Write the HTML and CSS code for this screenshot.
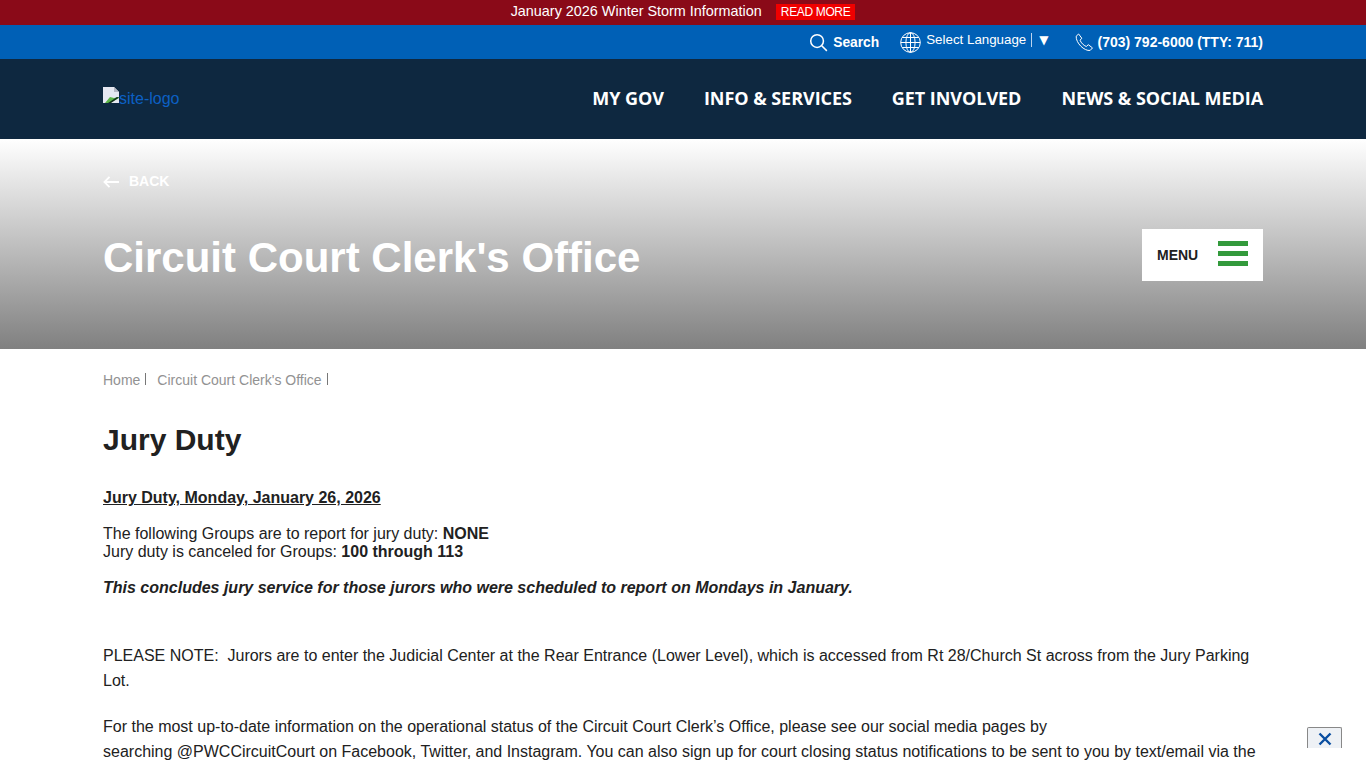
FILE: index.html
```html
<!DOCTYPE html>
<html lang="en">
<head>
  <meta charset="UTF-8" />
  <meta name="viewport" content="width=device-width, initial-scale=1.0"/>
  <title>Jury Duty</title>
  <link rel="stylesheet" href="styles.css">
</head>
<body>

  <!-- Alert bar -->
  <div class="alert-bar">
    <span class="alert-text">January 2026 Winter Storm Information</span>
    <a href="#" class="alert-btn">READ MORE</a>
  </div>

  <!-- Utility bar -->
  <div class="util-bar">
    <div class="wrap util-row">
      <a href="#" class="util-link util-search">
        <svg class="util-icon" width="19" height="19" viewBox="0 0 20 20" fill="none" stroke="#fff" stroke-width="1.6"><circle cx="8.5" cy="8.5" r="6.7"/><path d="M13.4 13.4l5.400 5.400"/></svg>
        Search
      </a>
      <div class="util-lang">
        <svg class="util-icon" width="21" height="21" viewBox="0 0 21 21" fill="none" stroke="#fff" stroke-width="1"><circle cx="10.5" cy="10.5" r="9.8"/><ellipse cx="10.5" cy="10.5" rx="4.6" ry="9.8"/><path d="M10.5.7v19.6M.7 10.5h19.6M2.2 5.500h16.600M2.200 15.500h16.600"/></svg>
        <span class="lang-text">Select Language</span>
        <span class="lang-arrow">▼</span>
      </div>
      <a href="#" class="util-link util-phone">
        <svg class="util-icon" width="19" height="19" viewBox="0 0 19 19" fill="none" stroke="#fff" stroke-width="1"><path d="M1.200 3.200L3.600 1l3.200 4.200-1.700 2c.9 2.600 3.400 5.200 6.200 6.300l2-1.800 4.200 3.200-2.300 2.500C9.500 18.500.6 9.800 1.200 3.200z"/></svg>
        (703) 792-6000 (TTY: 711)
      </a>
    </div>
  </div>

  <!-- Main header -->
  <header class="main-header">
    <div class="wrap header-row">
      <a href="#" class="logo">
        <svg class="broken-img" width="16" height="16" viewBox="0 0 16 16"><path d="M0 0h11l5 5v11H0z" fill="#e6e8f2"/><path d="M11 0l5 5h-5z" fill="#b5b8c4"/><path d="M2 16l5-6 4 1 5-1v1l-9 5z" fill="#5cb548"/><path d="M5 16l9-6 2 .500-8 5.500z" fill="#12301c"/></svg><span>site-logo</span>
      </a>
      <nav class="main-nav">
        <a href="#">MY GOV</a>
        <a href="#">INFO &amp; SERVICES</a>
        <a href="#">GET INVOLVED</a>
        <a href="#">NEWS &amp; SOCIAL MEDIA</a>
      </nav>
    </div>
  </header>

  <!-- Hero -->
  <section class="hero">
    <div class="wrap">
      <a href="#" class="back-link">
        <svg width="16" height="12" viewBox="0 0 16 12" fill="none" stroke="#fff" stroke-width="1.8"><path d="M16 6H1.500M6.500.8L1.400 6l5.100 5.200"/></svg>
        BACK
      </a>
      <div class="hero-row">
        <h1>Circuit Court Clerk's Office</h1>
        <button class="menu-btn">
          MENU
          <span class="menu-bars"><i></i><i></i><i></i></span>
        </button>
      </div>
    </div>
  </section>

  <!-- Content -->
  <main class="wrap content">
    <div class="crumbs">
      <a href="#">Home</a>
      <a href="#">Circuit Court Clerk's Office</a>
    </div>

    <h2>Jury Duty</h2>

    <p class="date-line"><strong><u>Jury Duty, Monday, January 26, 2026</u></strong></p>

    <p class="tight">The following Groups are to report for jury duty: <strong>NONE</strong><br>
    Jury duty is canceled for Groups: <strong>100 through 113</strong></p>

    <p class="tight"><strong><em>This concludes jury service for those jurors who were scheduled to report on Mondays in January.</em></strong></p>

    <p class="note">PLEASE NOTE:&nbsp; Jurors are to enter the Judicial Center at the Rear Entrance (Lower Level), which is accessed from Rt 28/Church St across from the Jury Parking Lot.</p>

    <p class="status">For the most up-to-date information on the operational status of the Circuit Court Clerk’s Office, please see our social media pages by<br>
    searching @PWCCircuitCourt on Facebook, Twitter, and Instagram. You can also sign up for court closing status notifications to be sent to you by text/email via the</p>
  </main>

  <button class="close-btn" aria-label="Close">
    <svg width="14" height="14" viewBox="0 0 14 14" fill="none" stroke="#0a4ea0" stroke-width="2.4"><path d="M1.500 1.500l11 11M12.500 1.500l-11 11"/></svg>
  </button>

</body>
</html>
```

FILE: styles.css
```css
html, body {
  height: 100%;
  overflow: hidden;
}

body {
  font-family: "Liberation Sans", Arial, sans-serif;
  font-size: 16px;
  color: #212121;
  background: #fff;
  margin: 0;
  padding: 0;
}

a {
  text-decoration: none;
}

.wrap {
  width: 1160px;
  margin: 0 auto;
}

.alert-bar {
  height: 25px;
  background: #8a0a18;
  color: #fff;
  display: flex;
  justify-content: center;
  align-items: flex-start;
  gap: 14px;
  font-size: 14.4px;
  line-height: 22px;
}

.alert-btn {
  margin-top: 4px;
  background: #f00000;
  color: #fff;
  font-size: 12px;
  letter-spacing: -0.35px;
  line-height: 16px;
  padding: 0 5px;
}

.util-bar {
  height: 34px;
  background: #0060b6;
}

.util-row {
  height: 34px;
  display: flex;
  justify-content: flex-end;
  align-items: center;
  color: #fff;
}

.util-link {
  color: #fff;
  font-size: 14px;
  font-weight: bold;
  display: flex;
  align-items: center;
}

.util-icon {
  flex: none;
}

.util-search {
  font-size: 13.8px;
}

.util-search svg {
  margin-right: 5px;
}

.util-lang {
  display: flex;
  align-items: center;
  margin-left: 21px;
  font-size: 13.33px;
}

.lang-text {
  margin-left: 5px;
  padding-right: 5px;
  border-right: 1px solid #bcd4ee;
  line-height: 14px;
  position: relative;
  top: -2px;
}

.lang-arrow {
  margin-left: 7px;
  font-family: "DejaVu Sans", sans-serif;
  font-size: 12px;
  position: relative;
  top: -2px;
}

.util-phone {
  margin-left: 26px;
}

.util-phone svg {
  margin-right: 4px;
}

.main-header {
  height: 80px;
  background: #0e2840;
}

.header-row {
  height: 80px;
  display: flex;
  justify-content: space-between;
  align-items: center;
}

.logo {
  color: #0c60c4;
  font-size: 16px;
  display: flex;
  align-items: flex-start;
  height: 24px;
}

.broken-img {
  flex: none;
}

.logo span {
  margin-top: 3px;
}

.main-nav {
  display: flex;
  gap: 40px;
  margin-bottom: 2px;
}

.main-nav a {
  color: #fff;
  font-family: "Open Sans", sans-serif;
  font-size: 18px;
  font-weight: 700;
  letter-spacing: -0.05px;
}

.hero {
  height: 210px;
  background: linear-gradient(to bottom, #ffffff 0%, #808080 100%);
}

.back-link {
  display: flex;
  align-items: center;
  gap: 10px;
  padding-top: 34px;
  color: #fff;
  font-size: 14px;
  font-weight: bold;
  line-height: 16px;
}

.back-link svg {
  margin-top: 2px;
}

.hero-row {
  display: flex;
  justify-content: space-between;
  align-items: flex-start;
  margin-top: 40px;
}

h1 {
  margin: 0;
  color: #fff;
  font-size: 42px;
  line-height: 58px;
  font-weight: bold;
}

.menu-btn {
  width: 121px;
  height: 52px;
  background: #fff;
  border: none;
  padding: 0 15px;
  display: flex;
  justify-content: space-between;
  align-items: center;
  font-family: inherit;
  font-size: 14px;
  font-weight: bold;
  color: #212121;
}

.menu-bars {
  display: flex;
  flex-direction: column;
  gap: 5px;
  margin-bottom: 4px;
}

.menu-bars i {
  display: block;
  width: 30px;
  height: 5px;
  background: #339a3c;
}

.crumbs {
  padding-top: 23px;
  display: flex;
  font-size: 14px;
  line-height: 16px;
}

.crumbs a {
  color: #929292;
  padding-right: 6px;
  margin-right: 11px;
  position: relative;
}

.crumbs a::after {
  content: "";
  position: absolute;
  right: 0;
  top: 1px;
  width: 1px;
  height: 12px;
  background: #777;
}

h2 {
  margin: 34px 0 0;
  font-size: 30px;
  line-height: 36px;
  font-weight: bold;
  color: #212121;
}

.content p {
  margin: 0;
}

.content .date-line {
  margin-top: 31px;
  line-height: 18px;
}

.content .tight {
  margin-top: 18px;
  line-height: 18px;
}

.content .note {
  margin-top: 46px;
  line-height: 25px;
}

.content .status {
  margin-top: 21px;
  line-height: 25px;
}

.close-btn {
  position: fixed;
  right: 24px;
  bottom: 20px;
  width: 35px;
  height: 21px;
  padding: 2px 0 0;
  background: #eef1f5;
  border: 1px solid #888;
  border-bottom: none;
  border-radius: 2px 2px 0 0;
  display: flex;
  justify-content: center;
  align-items: center;
}
```
